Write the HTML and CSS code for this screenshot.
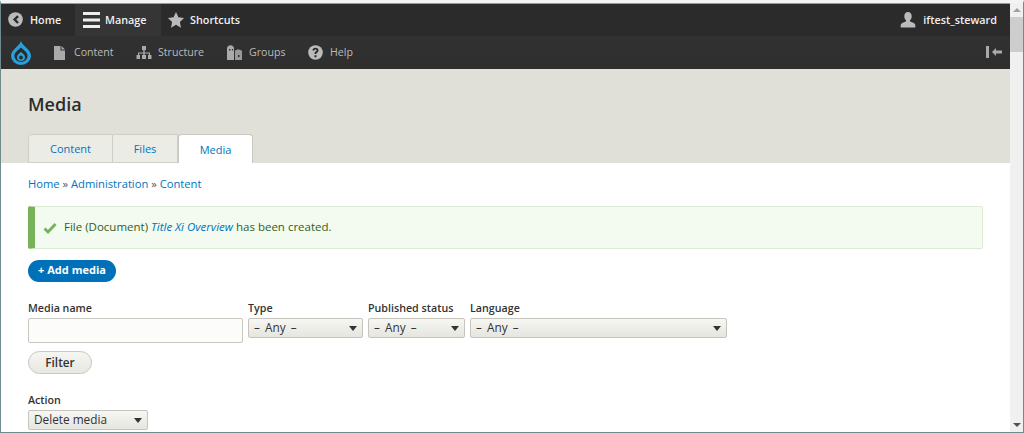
FILE: index.html
```html
<!DOCTYPE html>
<html lang="en">
<head>
<meta charset="utf-8">
<title>Media</title>
<link rel="stylesheet" href="styles.css">
</head>
<body>
<div class="window">
  <div class="viewport">
    <nav class="bar-top">
      <a class="top-item home"><svg class="ico-home" viewBox="0 0 16 16"><circle cx="8" cy="8" r="7.800" fill="#bbb"/><path d="M9.800 3.400 5.200 8l4.600 4.600 1.800-1.800L8.800 8l2.800-2.800z" fill="#2c2c2c"/></svg>Home</a>
      <a class="top-item active"><svg class="ico-menu" viewBox="0 0 17 16"><path d="M0 0h17v3H0zM0 6.500h17v3H0zM0 13h17v3H0z" fill="#eee"/></svg>Manage</a>
      <a class="top-item"><svg class="ico-star" viewBox="0 0 16 16"><path d="M8 0l2.400 5.300 5.600.7-4.100 3.900 1.100 5.800L8 12.800l-5 2.900 1.100-5.800L0 6l5.600-.7z" fill="#bbb"/></svg>Shortcuts</a>
      <a class="top-item user"><svg class="ico-user" viewBox="0 0 16 16"><path d="M8 0c2.300 0 3.700 1.700 3.700 4.200 0 1.800-.8 3.300-1.700 4.100v1.300c1.800.7 4.700 1.500 5.300 3.200V15.500H.7v-2.700c.6-1.700 3.500-2.500 5.300-3.200V8.300C5.100 7.500 4.300 6 4.300 4.200 4.300 1.700 5.700 0 8 0z" fill="#bbb"/></svg>iftest_steward</a>
    </nav>
    <nav class="bar-tray">
      <svg class="logo" viewBox="0 0 20 24"><path d="M10 0c.8 2.600 2.700 4.300 4.800 6.200C17.600 8.700 20 11.400 20 15a10 9 0 0 1-20 0c0-3.600 2.400-6.300 5.200-8.800C7.300 4.300 9.200 2.600 10 0z" fill="#27a0dc"/><path d="M10 6.500c-3 2.600-6.600 5-6.600 8.500a6.600 6 0 0 0 13.200 0c0-3.500-3.600-5.900-6.600-8.500z" fill="#2c2c2c"/><path d="M10 11c-2.400 1.800-4 3.100-4 5.200a4 3.800 0 0 0 8 0c0-2.100-1.600-3.400-4-5.200z" fill="#27a0dc"/><circle cx="10" cy="16.500" r="1.900" fill="#2c2c2c"/></svg>
      <a class="tray-item t-content"><svg class="ico-doc" viewBox="0 0 11 14"><path d="M0 0h6.500v4.500H11V14H0z" fill="#aaa"/><path d="M7.500 0 11 3.500H7.500z" fill="#aaa"/></svg><span class="tl tl-content">Content</span></a>
      <a class="tray-item t-structure"><svg class="ico-tree" viewBox="0 0 16 14"><path d="M6 0h4v4H8.700v2.500H14V9h1.500v4h-3.500V9h.8V7.500H8.700V9H10v4H6V9h1.300V7.500H3.200V9H4v4H.5V9H2V6.500h5.300V4H6z" fill="#aaa"/></svg><span class="tl tl-structure">Structure</span></a>
      <a class="tray-item t-groups"><svg class="ico-group" viewBox="0 0 15 15"><path d="M0 3.500C0 1.500 1.300.2 3.500.2S7 1.500 7 3.500V15H0z" fill="#aaa"/><path d="M8 6c.5-1 1.800-1.500 3-1.500S14.500 5 15 6v9H8z" fill="#999"/><rect x="2" y="4" width="1.500" height="1.500" fill="#2c2c2c"/><rect x="5" y="4" width="1" height="1.500" fill="#2c2c2c"/><rect x="11" y="10" width="1.500" height="2" fill="#2c2c2c"/></svg><span class="tl tl-groups">Groups</span></a>
      <a class="tray-item"><svg class="ico-help" viewBox="0 0 16 16"><circle cx="8" cy="8" r="7.800" fill="#bbb"/><path d="M8 3c-2 0-3.200 1-3.300 2.800h2c.1-.7.500-1.100 1.300-1.100s1.200.4 1.200 1c0 1.200-2.300 1.400-2.300 3.600v.4h2v-.3c0-1.300 2.400-1.600 2.400-3.900C11.300 4 9.900 3 8 3zM6.900 11h2.200v2H6.900z" fill="#2c2c2c"/></svg><span class="tl">Help</span></a>
      <svg class="ico-collapse" viewBox="0 0 16 12"><path d="M0 0h3v12H0z" fill="#aaa"/><path d="M6 6l4-4v2.500h6v3h-6V10z" fill="#aaa"/></svg>
    </nav>
    <header class="page-head">
      <h1>Media</h1>
      <ul class="tabs">
        <li class="tab"><a>Content</a></li>
        <li class="tab"><a>Files</a></li>
        <li class="tab current"><a>Media</a></li>
      </ul>
    </header>
    <main class="page">
      <p class="crumbs"><a>Home</a> » <a>Administration</a> » <a>Content</a></p>
      <div class="msg"><svg class="ico-check" viewBox="0 0 14 12"><path d="M1.500 6.500 5 10l7.500-8" fill="none" stroke="#73b355" stroke-width="2.800"/></svg><span>File (Document) <a><em>Title Xi Overview</em></a> has been created.</span></div>
      <a class="add-btn">+ Add media</a>
      <form class="filters">
        <div class="field"><label>Media name</label><div class="input"></div></div>
        <div class="field f-type"><label>Type</label><div class="select any">– Any –</div></div>
        <div class="field f-status"><label>Published status</label><div class="select any">– Any –</div></div>
        <div class="field f-lang"><label>Language</label><div class="select any">– Any –</div></div>
      </form>
      <div class="filter-btn">Filter</div>
      <div class="field f-action"><label>Action</label><div class="select">Delete media</div></div>
    </main>
  </div>
  <aside class="scrollbar">
    <span class="arrow up"></span>
    <span class="thumb"></span>
    <span class="arrow down"></span>
  </aside>
</div>
</body>
</html>
```
FILE: styles.css
```css
* { box-sizing: border-box; }
html, body { margin: 0; height: 100%; overflow: hidden; background: #fff; }
body { font-family: "Open Sans", sans-serif; color: #333; }
a { color: #0074bd; text-decoration: none; }

.window {
  display: flex;
  height: 433px;
  border-left: 1px solid #6f8c8c;
  border-right: 1px solid #6f8c8c;
  border-bottom: 1px solid #6f8c8c;
  border-top: 3px solid #f4f4f4;
  overflow: hidden;
}
.viewport { flex: 1; min-width: 0; overflow: hidden; }

.bar-top {
  height: 33px;
  background: #2b2b2b;
  border-top: 1px solid #9a9a9a;
  display: flex;
  align-items: stretch;
  font: 600 10.800px "Open Sans", sans-serif;
  color: #f0f0f0;
}
.top-item { display: flex; align-items: center; color: #f0f0f0; padding: 0 7px 1px; }
.top-item.home { width: 74px; }
.top-item.active { background: #353535; width: 86px; padding-left: 8px; }
.top-item.user { margin-left: auto; padding: 0 13px 1px 0; }
.ico-home { width: 15px; height: 15px; margin-right: 7px; }
.ico-menu { width: 17px; height: 16px; margin-right: 5px; }
.ico-star { width: 16px; height: 16px; margin-right: 6px; }
.ico-user { width: 16px; height: 16px; margin-right: 7px; }

.bar-tray {
  height: 33px;
  background: linear-gradient(#313131, #2e2e2e);
  display: flex;
  align-items: center;
  font: 400 10.600px "Open Sans", sans-serif;
}
.logo { width: 20px; height: 24px; margin: 0 23px 0 10px; }
.tray-item { display: flex; align-items: center; color: #bbb; }
.tl { padding-bottom: 2px; }
.tl-content { width: 40px; }
.tl-structure { width: 46px; }
.tl-groups { width: 36px; }
.t-content { margin-right: 22px; }
.t-structure { margin-right: 23px; }
.t-groups { margin-right: 23px; }
.ico-doc { width: 11px; height: 14px; margin-right: 9px; }
.ico-tree { width: 16px; height: 14px; margin-right: 6px; }
.ico-group { width: 15px; height: 15px; margin-right: 7px; }
.ico-help { width: 15px; height: 15px; margin-right: 7px; }
.ico-collapse { width: 16px; height: 12px; margin: 0 8px 2px auto; }

.page-head { height: 94px; background: #e0e0d8; padding: 23px 0 0 27px; display: flex; flex-direction: column; }
h1 { margin: 0; font-size: 18px; line-height: 24px; font-weight: 600; color: #2d2d2d; }
.tabs { list-style: none; margin: auto 0 0; padding: 0; display: flex; height: 29px; }
.tab {
  background: #ecece6;
  border: 1px solid #cfcfc8;
  border-left-width: 0;
  font-size: 11px;
  line-height: 28px;
  text-align: center;
  width: 85px;
}
.tab:first-child { border-left-width: 1px; border-top-left-radius: 4px; }
.tab:nth-child(2) { width: 65px; }
.tab.current {
  width: 75px;
  background: #fff;
  border-left-width: 1px;
  border-color: #c8c8c0;
  border-radius: 4px 4px 0 0;
  border-bottom: 0;
  line-height: 29px;
}

.page { padding: 0 27px 0 27px; font-size: 11.500px; }
.crumbs { margin: 0; height: 43px; padding-top: 13px; line-height: 15px; color: #555; font-size: 11.200px; }
.msg {
  height: 43px;
  background: #f3faef;
  border: 1px solid #dcebd3;
  border-left: 7px solid #77b259;
  border-radius: 2px;
  display: flex;
  align-items: center;
  padding: 0 0 2px 8px;
  color: #325e1c;
}
.ico-check { width: 14px; height: 12px; margin: 2px 7px 0 0; }
.add-btn {
  display: block;
  width: 88px;
  height: 22px;
  margin-top: 11px;
  border-radius: 11px;
  background: #0071b8;
  color: #fff;
  font-weight: 700;
  font-size: 11px;
  line-height: 20px;
  text-align: center;
}
.filters { display: flex; gap: 5px; margin-top: 19px; }
.filters label { line-height: 15px; margin-bottom: 2px; }
label { display: block; font-weight: 600; font-size: 10.700px; line-height: 15px; color: #333; margin-bottom: 2px; }
.input {
  width: 215px;
  height: 25px;
  background: #fcfcfa;
  border: 1px solid #c8c8c0;
  border-radius: 2px;
}
.select {
  height: 20px;
  border: 1px solid #c5c5bd;
  border-radius: 2px;
  background: linear-gradient(#f6f6f3, #e6e6df);
  font-size: 11.800px;
  line-height: 16px;
  padding-left: 5px;
  position: relative;
  color: #333;
}
.select.any { word-spacing: 2px; }
.select::after {
  content: "";
  position: absolute;
  right: 5px;
  top: 7px;
  border: 4px solid transparent;
  border-top: 5px solid #333;
  border-bottom: 0;
}
.f-type .select { width: 115px; }
.f-status .select { width: 97px; }
.f-lang .select { width: 257px; }
.filter-btn {
  width: 64px;
  height: 23px;
  margin-top: 8px;
  border: 1px solid #c8c8c0;
  border-radius: 12px;
  background: linear-gradient(#f5f5f2, #e8e8e2);
  font-weight: 600;
  font-size: 11.800px;
  line-height: 21px;
  text-align: center;
}
.f-action { margin-top: 19px; width: 120px; }

.scrollbar {
  flex: none;
  width: 13px;
  background: #f0f0f0;
  display: flex;
  flex-direction: column;
  align-items: center;
}
.arrow { flex: none; height: 14px; display: flex; align-items: center; justify-content: center; }
.arrow.up::before { content: ""; border: 4px solid transparent; border-bottom: 4px solid #a0a0a0; border-top: 0; }
.arrow.down { margin-top: auto; }
.arrow.down::before { content: ""; border: 4px solid transparent; border-top: 4px solid #505050; border-bottom: 0; }
.thumb { flex: none; width: 100%; height: 35px; background: #cdcdcd; }
```
